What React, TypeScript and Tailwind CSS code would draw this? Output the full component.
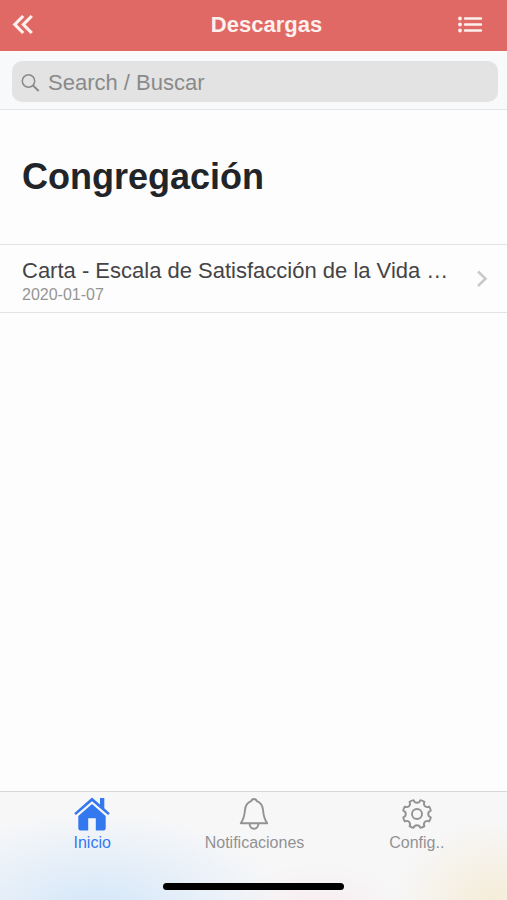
import React from "react";

const polar = (radius: number, degrees: number) => {
  const t = (degrees * Math.PI) / 180;
  return `${(16 + radius * Math.sin(t)).toFixed(2)} ${(16 - radius * Math.cos(t)).toFixed(2)}`;
};

const gearOutline =
  [0, 1, 2, 3, 4, 5, 6, 7]
    .map((i) => {
      const a = i * 45 + 22.5;
      return `${i === 0 ? "M" : "L"}${polar(14.2, a - 9)} Q${polar(14.5, a)} ${polar(14.2, a + 9)} C${polar(10.6, a + 10)} ${polar(10.6, a + 35)} ${polar(14.2, a + 36)}`;
    })
    .join(" ") + "Z";

function BackIcon() {
  return (
    <svg width="24" height="24" viewBox="0 0 24 24" fill="none" stroke="currentColor" strokeWidth="3.2" aria-hidden="true">
      <path d="M13.2 3 4.800 11.500l8.400 8.500M21.800 3 13.400 11.500l8.400 8.500" />
    </svg>
  );
}

function ListIcon() {
  return (
    <svg width="26" height="18" viewBox="0 0 26 18" fill="none" stroke="currentColor" aria-hidden="true">
      <path d="M8 2.500H24M8 8.500H24M8 14.500H24" strokeWidth="2.400" strokeLinecap="round" />
      <path d="M3 2.500h.01M3 8.500h.01M3 14.500h.01" strokeWidth="3.800" strokeLinecap="round" />
    </svg>
  );
}

function SearchIcon() {
  return (
    <svg width="20" height="20" viewBox="0 0 20 20" fill="none" stroke="currentColor" strokeWidth="1.500" aria-hidden="true">
      <circle cx="8.500" cy="9" r="6.200" />
      <path d="m13 13.500 5.700 5.500" strokeWidth="2" />
    </svg>
  );
}

function HomeIcon() {
  return (
    <svg width="36" height="34" viewBox="0 0 36 34" fill="currentColor" aria-hidden="true">
      <path d="M18 .6 26 7.500V1.100h4.300v10.200l5.500 4.900-1.700 1.900L18 4.200 1.900 18.100.2 16.200z" />
      <path d="M18 7 31.700 19v12q0 2.500-2.500 2.500h-7.400V21.300h-7.600v12.200H6.800q-2.500 0-2.500-2.500V19z" />
    </svg>
  );
}

function BellIcon() {
  return (
    <svg width="32" height="34" viewBox="0 0 32 34" fill="none" stroke="currentColor" strokeWidth="1.900" strokeLinejoin="round" aria-hidden="true">
      <path d="M16 2c-1.400 0-2.500.8-2.900 2.200C9.300 5.600 7.300 8.800 6.900 13.500 6.500 19.500 5.700 22 2.800 26.300h26.400c-2.900-4.300-3.700-6.800-4.100-12.800-.4-4.700-2.400-7.900-6.200-9.300C18.500 2.800 17.400 2 16 2z" />
      <path d="M11.500 26.500c.3 3.400 1.900 5.200 4.500 5.200s4.200-1.800 4.500-5.200" />
    </svg>
  );
}

function GearIcon() {
  return (
    <svg width="32" height="32" viewBox="0 0 32 32" fill="none" stroke="currentColor" strokeWidth="1.900" strokeLinejoin="round" aria-hidden="true">
      <path d={gearOutline} />
      <circle cx="16" cy="16" r="5" />
    </svg>
  );
}

const tabs = [
  { label: "Inicio", icon: <HomeIcon />, active: true },
  { label: "Notificaciones", icon: <BellIcon />, active: false },
  { label: "Config..", icon: <GearIcon />, active: false },
];

export default function App() {
  return (
    <div className="flex min-h-screen flex-col bg-[#fdfdfd] font-['Liberation_Sans',Arial,sans-serif]">
      <header className="grid h-[51px] grid-cols-[1fr_auto_1fr] items-center bg-[#e06966] pr-6 pb-px pl-[10px] text-[#fdf0ed]">
        <button type="button" aria-label="Atrás" className="justify-self-start">
          <BackIcon />
        </button>
        <h1 className="pl-10 text-[22px] leading-7 font-bold">Descargas</h1>
        <button type="button" aria-label="Menú" className="justify-self-end">
          <ListIcon />
        </button>
      </header>

      <div className="border-b border-[#e3e5e9] bg-[#f8f9fa] pt-[10px] pr-[9px] pb-[7px] pl-3">
        <label className="flex h-[41px] items-center gap-2 rounded-[10px] bg-[#e3e3e3] px-2 text-[#8a8a8a]">
          <SearchIcon />
          <input
            type="search"
            aria-label="Search / Buscar"
            placeholder="Search / Buscar"
            className="h-full min-w-0 flex-1 bg-transparent pt-0.5 text-[22px] text-[#444] outline-none placeholder:text-[#8a8a8a]"
          />
        </label>
      </div>

      <main className="flex-1">
        <h2 className="px-[22px] py-11 text-[36px] leading-[46px] font-bold text-[#212428]">Congregación</h2>
        <ul className="border-y border-[#e3e3e5]">
          <li>
            <a href="#carta" className="flex items-center justify-between pt-3 pr-[18px] pb-2 pl-[22px]">
              <span className="flex min-w-0 flex-col">
                <span className="truncate text-[22px] leading-7 text-[#444446]">
                  Carta - Escala de Satisfacción de la Vida …
                </span>
                <span className="text-[16px] leading-[19px] text-[#959595]">2020-01-07</span>
              </span>
              <svg width="14" height="24" viewBox="0 0 14 24" fill="none" stroke="#c8c8ca" strokeWidth="2.500" aria-hidden="true">
                <path d="m3 2.500 7.500 7.200L3 17" />
              </svg>
            </a>
          </li>
        </ul>
      </main>

      <footer className="border-t border-[#d6d7d9] bg-[#f7f7f8] bg-[radial-gradient(ellipse_190px_100px_at_19%_112%,#d3e6f9,#e6eff900),radial-gradient(ellipse_100px_90px_at_97%_108%,#f5ecd6,#f7f3e900),radial-gradient(ellipse_90px_50px_at_63%_112%,#f8ecee,#f8f0f200)]">
        <nav className="flex h-[91px] items-start pt-[5px] pr-[9px] pl-[11px]">
          {tabs.map((tab) => (
            <button
              key={tab.label}
              type="button"
              aria-current={tab.active ? "page" : undefined}
              className={`flex flex-1 basis-0 flex-col items-center ${tab.active ? "text-[#3478f0]" : "text-[#929294]"}`}
            >
              <span className="flex h-[34px] items-center">{tab.icon}</span>
              <span className="pt-0.5 text-[16px] leading-5">{tab.label}</span>
            </button>
          ))}
        </nav>
        <div className="mx-auto mb-[10px] h-[7px] w-[181px] rounded-full bg-black" />
      </footer>
    </div>
  );
}
